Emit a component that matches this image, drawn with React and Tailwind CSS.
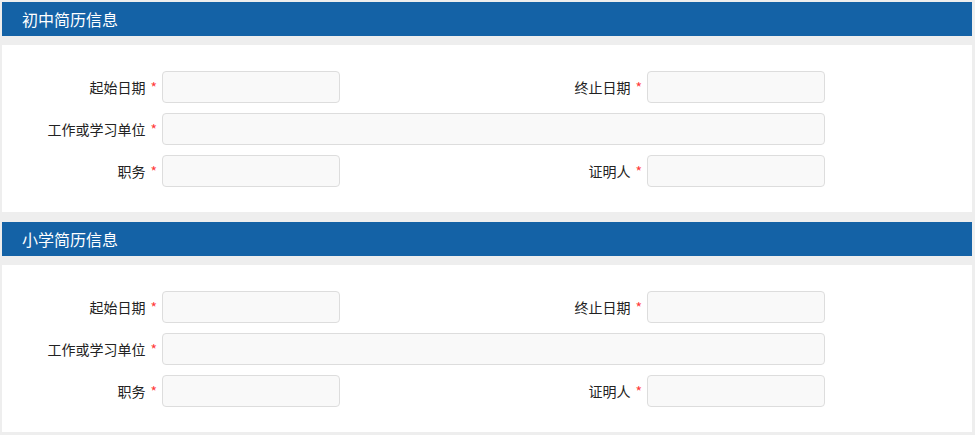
import React from 'react';

const font = { fontFamily: '"Microsoft YaHei", "Noto Sans CJK SC", "Noto Sans", sans-serif' };

const Label = ({ text, className }) => (
  <div className={`flex items-center justify-end pr-[5px] text-[14px] text-[#222] ${className}`}>
    <span>{text}</span>
    <span className="ml-[5px] text-[#ff3b3b]">*</span>
  </div>
);

const Field = ({ className }) => (
  <input
    type="text"
    className={`h-[32px] rounded-[4px] border border-[#dddddd] bg-[#f9f9f9] outline-none ${className}`}
  />
);

const Section = ({ title, className }) => (
  <div className={className}>
    {/* title bar */}
    <div className="flex h-[34px] items-center bg-[#1462a6] pl-[20px] text-[16px] text-white">
      {title}
    </div>

    <div className="mt-[9px] flex h-[167px] flex-col gap-[10px] bg-white pt-[26px]">
      <div className="flex items-center">
        <Label text="起始日期" className="w-[160px]" />
        <Field className="w-[178px]" />
        <Label text="终止日期" className="w-[307px]" />
        <Field className="w-[178px]" />
      </div>
      <div className="flex items-center">
        <Label text="工作或学习单位" className="w-[160px]" />
        <Field className="w-[663px]" />
      </div>
      <div className="flex items-center">
        <Label text="职务" className="w-[160px]" />
        <Field className="w-[178px]" />
        <Label text="证明人" className="w-[307px]" />
        <Field className="w-[178px]" />
      </div>
    </div>
  </div>
);

const App = () => {
  return (
    <div className="h-[435px] w-[975px] bg-[#eeeeee] pl-[2px] pr-[3px] pt-[2px]" style={font}>
      <Section title="初中简历信息" />
      <Section title="小学简历信息" className="mt-[10px]" />
    </div>
  );
};

export default App;
